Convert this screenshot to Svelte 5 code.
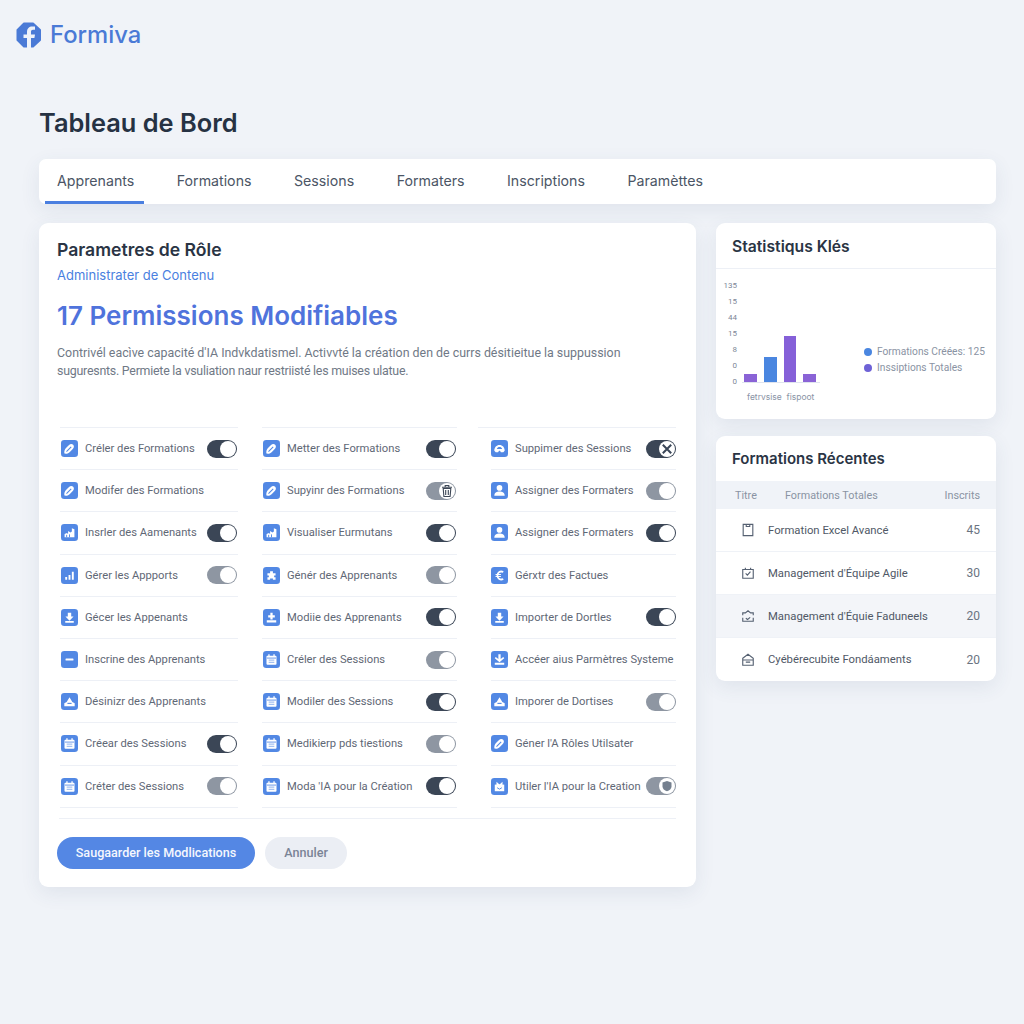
<script>
  const tabs = ['Apprenants', 'Formations', 'Sessions', 'Formaters', 'Inscriptions', 'Paramèttes'];

  // toggle: on, off, or null when the row has none. knob: optional glyph in the knob
  const columns = [
    [
      { label: 'Créler des Formations', icon: 'pen', toggle: 'on' },
      { label: 'Modifer des Formations', icon: 'pen', toggle: null },
      { label: 'Insrler des Aamenants', icon: 'chart', toggle: 'on' },
      { label: 'Gérer les Appports', icon: 'bars', toggle: 'off' },
      { label: 'Gécer les Appenants', icon: 'download', toggle: null },
      { label: 'Inscrine des Apprenants', icon: 'minus', toggle: null },
      { label: 'Désinizr des Apprenants', icon: 'tray', toggle: null },
      { label: 'Créear des Sessions', icon: 'calendar', toggle: 'on' },
      { label: 'Créter des Sessions', icon: 'calendar', toggle: 'off' }
    ],
    [
      { label: 'Metter des Formations', icon: 'pen', toggle: 'on' },
      { label: 'Supyinr des Formations', icon: 'pen', toggle: 'off', knob: 'trash' },
      { label: 'Visualiser Eurmutans', icon: 'chart', toggle: 'on' },
      { label: 'Génér des Apprenants', icon: 'puzzle', toggle: 'off' },
      { label: 'Modiie des Apprenants', icon: 'upload', toggle: 'on' },
      { label: 'Créler des Sessions', icon: 'calendar', toggle: 'off' },
      { label: 'Modiler des Sessions', icon: 'calendar', toggle: 'on' },
      { label: 'Medikierp pds tiestions', icon: 'calendar', toggle: 'off' },
      { label: "Moda 'IA pour la Création", icon: 'calendar', toggle: 'on' }
    ],
    [
      { label: 'Suppimer des Sessions', icon: 'car', toggle: 'on', knob: 'x' },
      { label: 'Assigner des Formaters', icon: 'user', toggle: 'off' },
      { label: 'Assigner des Formaters', icon: 'user', toggle: 'on' },
      { label: 'Gérxtr des Factues', icon: 'euro', toggle: null },
      { label: 'Importer de Dortles', icon: 'download', toggle: 'on' },
      { label: 'Accéer aius Parmètres Systeme', icon: 'import', toggle: null },
      { label: 'Imporer de Dortises', icon: 'tray', toggle: 'off' },
      { label: "Géner l'A Rôles Utilsater", icon: 'pen', toggle: null },
      { label: "Utiler l'IA pour la Creation", icon: 'gift', toggle: 'off', knob: 'shield' }
    ]
  ];

  const ticks = ['135', '15', '44', '15', '8', '0', '0'];
  const bars = [
    { h: 8, color: '#8a63d6' },
    { h: 25, color: '#4a86e0' },
    { h: 46, color: '#8560d8' },
    { h: 8, color: '#8a63d6' }
  ];

  const recent = [
    { title: 'Formation Excel Avancé', count: 45, icon: 'doc' },
    { title: "Management d'Équipe Agile", count: 30, icon: 'check' },
    { title: "Management d'Équie Faduneels", count: 20, icon: 'dash', shaded: true },
    { title: 'Cyébérecubite Fondáaments', count: 20, icon: 'house' }
  ];
</script>

{#snippet permIcon(name)}
  <svg class="perm-icon" viewBox="0 0 18 18" aria-hidden="true">
    <rect width="18" height="18" rx="3.5" fill="#5288e4" />
    {#if name === 'pen'}
      <path d="M3.6 14.4c-.5-2.6.4-4.7 2.2-6.5l2.7-2.7c1.3-1.2 3.2-1.3 4.4-.1 1.1 1.2 1 3-.2 4.2l-2.8 2.8c-1.8 1.8-3.7 2.8-6.300 2.300z" fill="#fff" />
      <path d="M5.8 12.3l5-5" stroke="#5288e4" stroke-width="1.1" />
    {:else if name === 'chart'}
      <path d="M3.8 14v-3.5l2.500-1 1.200 1V7.500l2.500 1.500 1.500-1V4.500l2.700 1V14z" fill="#fff" />
      <path d="M6 14v-2.500M9 14v-3" stroke="#5288e4" stroke-width="1" />
    {:else if name === 'bars'}
      <path d="M4.500 13.500v-3h2v3zM8 13.500v-5h2v5zM11.500 13.500v-8.500h2v8.500z" fill="#fff" />
    {:else if name === 'download'}
      <path d="M7.200 4h3.600v4h2.500L9 12.500 4.700 8h2.500zM4.500 12.800h9V14.500h-9z" fill="#fff" />
    {:else if name === 'upload'}
      <path d="M7.800 4h2.400v2.600h2.300v2.300h-2.300V11H7.800V8.900H5.500V6.600h2.300zM4 12h10v2.200H4z" fill="#fff" />
    {:else if name === 'import'}
      <path d="M7.800 3.500h2.400v5l2.800-2.200 1 1.300L9 12 4 7.600l1-1.300 2.800 2.200zM4 12.500h10V14.500H4z" fill="#fff" />
    {:else if name === 'minus'}
      <rect x="4.800" y="8" width="8.400" height="2" rx=".6" fill="#fff" />
    {:else if name === 'tray'}
      <path d="M3.500 14v-3.200l2.500-1.300L9 4.500l3 5 2.500 1.300V14z" fill="#fff" />
      <path d="M6.800 11h4.400" stroke="#5288e4" stroke-width="1.200" />
    {:else if name === 'calendar'}
      <rect x="3.700" y="5" width="10.600" height="9.500" rx="1" fill="#fff" />
      <path d="M6.300 3.500v2.500M11.700 3.500v2.500" stroke="#fff" stroke-width="1.400" />
      <path d="M4.200 7.500h9.600" stroke="#5288e4" stroke-width=".9" />
      <path d="M6 9.700h6M6 12h6" stroke="#a5c1f1" stroke-width="1.200" />
    {:else if name === 'puzzle'}
      <path d="M7.500 4.500h3v2.200h2.800v2.200h-1.500v2h1.500v2.600h-2.800v-1.400H7.500v1.400H4.700v-2.600h1.500v-2H4.700V6.700h2.800z" fill="#fff" />
    {:else if name === 'car'}
      <path d="M3.500 11.500c0-3.800 2.300-6.200 5.500-6.200s5.500 2.400 5.500 6.200L13 13H10.500L9.500 11.500h-1L7.500 13H5z" fill="#fff" />
      <path d="M6.200 9.500c.6-1.400 1.500-2 2.800-2s2.200.6 2.800 2z" fill="#5288e4" />
    {:else if name === 'user'}
      <circle cx="9" cy="6.300" r="3" fill="#fff" />
      <path d="M3.500 14.500c0-3.200 2.500-4.500 5.500-4.500s5.500 1.300 5.500 4.500z" fill="#fff" />
    {:else if name === 'euro'}
      <path d="M13 5.300C9.800 3.900 7 5.600 6.800 9c.2 3.400 3 5.100 6.200 3.700" fill="none" stroke="#fff" stroke-width="1.900" />
      <path d="M4.800 8h5.700M4.800 10h5.700" stroke="#fff" stroke-width="1.200" />
    {:else if name === 'gift'}
      <path d="M4 7h10v7H4z" fill="#fff" />
      <path d="M5.800 4l3.200 3 3.200-3v3.500H5.800z" fill="#fff" />
      <path d="M6.500 10.300l2.500 1.500 2.500-1.500" fill="none" stroke="#5288e4" stroke-width="1" />
    {/if}
  </svg>
{/snippet}

{#snippet knobGlyph(name)}
  <svg class="knob-glyph" viewBox="0 0 16 16" aria-hidden="true">
    {#if name === 'trash'}
      <path d="M4.200 5.500h7.600l-.7 8H4.900zM3 4.200h10M6.200 4V2.500h3.600V4M6.700 7v5M9.300 7v5" fill="none" stroke="#3d4756" stroke-width="1.100" />
    {:else if name === 'x'}
      <path d="M3.800 3.800l8.400 8.400M12.200 3.800l-8.400 8.400" stroke="#3a4658" stroke-width="2" />
    {:else if name === 'shield'}
      <path d="M8 3l4.500 1.500v3.700c0 2.600-1.900 4.100-4.500 5-2.600-.9-4.500-2.400-4.500-5V4.500z" fill="#75808f" />
    {/if}
  </svg>
{/snippet}

{#snippet rowIcon(name)}
  <svg class="row-icon" viewBox="0 0 16 16" aria-hidden="true">
    {#if name === 'doc'}
      <path d="M2.500 1.500h11v13h-11zM6 1.500v2.500h4V1.500" />
    {:else if name === 'check'}
      <path d="M2 4h12v10H2zM5 4V2M11 4V2M5.300 8.500l2 2 3.500-4" />
    {:else if name === 'dash'}
      <path d="M2 7V4.500h3L8 2l3 2.500h3V7M2 10v4h12v-4M5.500 10.500l2 1.500 3-2.500" />
    {:else if name === 'house'}
      <path d="M2 6l6-4.500L14 6v8H2zM2 8h12M5.500 10.500h5" />
    {/if}
  </svg>
{/snippet}

<div class="page">
  <header class="brand">
    <svg class="logo" viewBox="0 0 26 26" aria-hidden="true">
      <path d="M8 1.500h9l7 6.500v10l-7 6.500H8L1.500 18V8z" fill="#4a7ad6" stroke="#4a7ad6" stroke-width="2" stroke-linejoin="round" />
      <path d="M11 26V16H7.500v-3.500H11V10c0-3.600 2.200-5.500 5.200-5.500H19v3.300h-2c-1.300 0-2 .7-2 2v2.700h4l-.6 3.500H15v10z" fill="#eef2f9" />
    </svg>
    <span class="brand-name">Formiva</span>
  </header>

  <h1>Tableau de Bord</h1>

  <nav class="tabs">
    {#each tabs as tab, i}
      <button class="tab" class:active={i === 0}>{tab}</button>
    {/each}
  </nav>

  <div class="layout">
    <main class="card perms">
      <h2>Parametres de Rôle</h2>
      <p class="role">Administrater de Contenu</p>
      <p class="count">17 Permissions Modifiables</p>
      <p class="desc">
        Contrivél eacìve capacité d'IA Indvkdatismel. Activvté la création den de currs désitieitue la suppussion<br />
        <span class="desc-tight">suguresnts. Permiete la vsuliation naur restriisté les muises ulatue.</span>
      </p>

      <div class="grid">
        {#each columns as col}
          <div class="col">
            {#each col as perm}
              <div class="perm">
                {@render permIcon(perm.icon)}
                <span class="perm-label">{perm.label}</span>
                {#if perm.toggle}
                  <span class="toggle {perm.toggle}">
                    <span class="knob">
                      {#if perm.knob}{@render knobGlyph(perm.knob)}{/if}
                    </span>
                  </span>
                {/if}
              </div>
            {/each}
          </div>
        {/each}
      </div>

      <div class="actions">
        <button class="btn primary">Saugaarder les Modlications</button>
        <button class="btn ghost">Annuler</button>
      </div>
    </main>

    <aside class="side">
      <section class="card stats">
        <h3>Statistiqus Klés</h3>
        <div class="stats-body">
          <div class="chart">
            <div class="plot">
              <div class="ticks">
                {#each ticks as t}<span>{t}</span>{/each}
              </div>
              <div class="bars">
                {#each bars as b}
                  <span class="bar" style="height: {b.h}px; background: {b.color}"></span>
                {/each}
              </div>
            </div>
            <div class="x-label">fetrvsise &nbsp;fispoot</div>
          </div>
          <ul class="legend">
            <li><i class="dot blue"></i>Formations Créées: 125</li>
            <li><i class="dot violet"></i>Inssiptions Totales</li>
          </ul>
        </div>
      </section>

      <section class="card recent">
        <h3>Formations Récentes</h3>
        <div class="thead">
          <span class="th-title">Titre</span>
          <span class="th-total">Formations Totales</span>
          <span class="th-count">Inscrits</span>
        </div>
        {#each recent as row}
          <div class="trow" class:shaded={row.shaded}>
            {@render rowIcon(row.icon)}
            <span class="trow-title">{row.title}</span>
            <span class="trow-count">{row.count}</span>
          </div>
        {/each}
      </section>
    </aside>
  </div>
</div>

<style>
  :global(body) {
    background: #f0f3f8;
    font-family: Inter, "Liberation Sans", sans-serif;
    color: #2a3444;
  }

  .page {
    height: 1024px;
    box-sizing: border-box;
    padding: 21px 28px 0 39px;
    overflow: hidden;
  }

  .brand {
    display: flex;
    align-items: center;
    gap: 8px;
    margin-left: -23px;
    height: 27px;
  }

  .logo {
    width: 26px;
    height: 26px;
  }

  .brand-name {
    font-size: 23.8px;
    font-weight: 500;
    color: #4a7ad6;
  }

  h1 {
    margin: 59px 0 0;
    font-size: 25.4px;
    line-height: 32px;
    font-weight: 600;
    color: #263243;
  }

  .card {
    background: #fff;
    border-radius: 9px;
    box-shadow: 0 6px 20px rgba(60, 80, 110, 0.09);
  }

  .tabs {
    display: flex;
    height: 45px;
    margin-top: 20px;
    padding-left: 6px;
    background: #fff;
    border-radius: 7px;
    box-shadow: 0 6px 20px rgba(60, 80, 110, 0.09);
  }

  .tab {
    padding: 0 10px 0 12px;
    margin-right: 20.5px;
    background: none;
    border: 0;
    border-bottom: 3px solid transparent;
    font: inherit;
    font-size: 14.2px;
    color: #4b5565;
  }

  .tab.active {
    border-bottom-color: #4a7fe0;
  }

  .layout {
    display: flex;
    gap: 20px;
    margin-top: 19px;
    align-items: flex-start;
  }

  .perms {
    width: 657px;
    height: 664px;
    box-sizing: border-box;
    padding: 16px 20px 0 18px;
  }

  h2 {
    margin: 0;
    font-size: 17.6px;
    line-height: 22px;
    font-weight: 600;
    color: #2a3444;
  }

  .role {
    margin: 5px 0 0;
    font-size: 13px;
    line-height: 18px;
    color: #4a7fe0;
  }

  .count {
    margin: 15px 0 0;
    font-size: 26px;
    line-height: 34px;
    font-weight: 600;
    color: #4f73dc;
  }

  .desc {
    margin: 11px 0 0;
    font-family: Roboto, sans-serif;
    font-size: 12.4px;
    line-height: 18px;
    white-space: nowrap;
    color: #707986;
  }

  .desc-tight {
    letter-spacing: -0.24px;
  }

  .grid {
    display: grid;
    grid-template-columns: 202px 216px 198px;
    margin: 47px 0 0 3px;
  }

  .col {
    border-top: 1px solid #edf0f6;
  }

  .col:nth-child(1) {
    margin-right: 24px;
  }

  .col:nth-child(2) {
    margin-right: 21px;
  }

  .perm {
    display: flex;
    align-items: center;
    height: 41.2px;
    border-bottom: 1px solid #edf0f6;
  }

  .col:last-child .perm {
    margin-left: 13px;
  }

  .perm-icon {
    flex: none;
    width: 17px;
    height: 17px;
    margin: 0 7px 0 1px;
  }

  .col:last-child .perm-icon {
    margin-left: 0;
  }

  .perm-label {
    flex: 1;
    font-family: Roboto, sans-serif;
    font-size: 11.2px;
    white-space: nowrap;
    color: #5f6876;
  }

  .toggle {
    flex: none;
    display: flex;
    align-items: center;
    justify-content: flex-end;
    width: 30px;
    height: 18px;
    margin-right: 1px;
    padding: 1px;
    box-sizing: border-box;
    border-radius: 9px;
  }

  .col:last-child .toggle {
    margin-right: 0;
  }

  .toggle.on {
    background: #3b4656;
  }

  .toggle.off {
    background: #8e96a2;
  }

  .knob {
    display: flex;
    width: 16px;
    height: 16px;
    border-radius: 50%;
    background: #fff;
  }

  .knob-glyph {
    width: 16px;
    height: 16px;
  }

  .actions {
    display: flex;
    gap: 10px;
    margin: 10px 0 0 2px;
    padding-top: 18px;
    border-top: 1px solid #edf0f6;
  }

  .btn {
    height: 32px;
    border: 0;
    border-radius: 16px;
    font-family: Roboto, sans-serif;
    font-size: 12.6px;
    font-weight: 500;
  }

  .btn.primary {
    width: 198px;
    margin-left: -2px;
    background: #5487e4;
    color: #f4f7fd;
  }

  .btn.ghost {
    width: 82px;
    background: #ebeef4;
    color: #7a8496;
  }

  .side {
    width: 280px;
    display: flex;
    flex-direction: column;
    gap: 17px;
  }

  h3 {
    margin: 0;
    font-size: 15.7px;
    font-weight: 600;
    color: #2a3444;
  }

  .stats {
    height: 196px;
  }

  .stats h3 {
    height: 45px;
    line-height: 48px;
    padding-left: 16px;
    border-bottom: 1px solid #edf0f6;
  }

  .stats-body {
    display: flex;
    align-items: flex-start;
  }

  .chart {
    width: 148px;
    padding: 9px 0 0 10px;
    box-sizing: border-box;
  }

  .plot {
    display: flex;
    align-items: flex-end;
    gap: 5px;
  }

  .ticks {
    display: flex;
    flex-direction: column;
    align-items: flex-end;
    width: 11px;
    font-family: Roboto, sans-serif;
    font-size: 8px;
    line-height: 16px;
    color: #7d8798;
  }

  .bars {
    display: flex;
    align-items: flex-end;
    gap: 7px;
    width: 78px;
    box-sizing: border-box;
    padding: 0 4px 0 2px;
    margin-bottom: 7px;
    border-bottom: 1px solid #dfe4ee;
  }

  .bar {
    width: 13px;
  }

  .x-label {
    margin: 0 0 0 21px;
    font-size: 8.5px;
    line-height: 14px;
    white-space: nowrap;
    color: #8a94a6;
  }

  .legend {
    list-style: none;
    margin: 75px 0 0;
    padding: 0;
    font-family: Roboto, sans-serif;
    font-size: 10.2px;
    line-height: 16px;
    color: #8a93a3;
    white-space: nowrap;
  }

  .legend li {
    display: flex;
    align-items: center;
    gap: 5px;
  }

  .dot {
    width: 8px;
    height: 8px;
    border-radius: 50%;
  }

  .dot.blue {
    background: #4a86e0;
  }

  .dot.violet {
    background: #6e62d6;
  }

  .recent {
    height: 245px;
    overflow: hidden;
  }

  .recent h3 {
    height: 45px;
    line-height: 46px;
    padding-left: 16px;
    font-size: 15px;
  }

  .thead {
    display: flex;
    align-items: center;
    height: 28px;
    padding: 0 16px 0 19px;
    background: #f0f3f8;
    font-family: Roboto, sans-serif;
    font-size: 10.8px;
    color: #8a93a3;
  }

  .th-title {
    width: 50px;
  }

  .th-total {
    flex: 1;
  }

  .trow {
    display: flex;
    align-items: center;
    height: 43px;
    box-sizing: border-box;
    padding: 0 16px 0 25px;
    border-bottom: 1px solid #eff2f7;
    font-family: Roboto, sans-serif;
    font-size: 11.3px;
    color: #4f5866;
  }

  .trow:last-child {
    border-bottom: 0;
  }

  .trow.shaded {
    background: #f3f5f9;
  }

  .row-icon {
    flex: none;
    width: 14px;
    height: 14px;
    margin-right: 13px;
    fill: none;
    stroke: #566172;
    stroke-width: 1.3;
  }

  .trow-title {
    flex: 1;
    white-space: nowrap;
  }

  .trow-count {
    font-size: 12px;
    color: #6a7381;
  }
</style>
